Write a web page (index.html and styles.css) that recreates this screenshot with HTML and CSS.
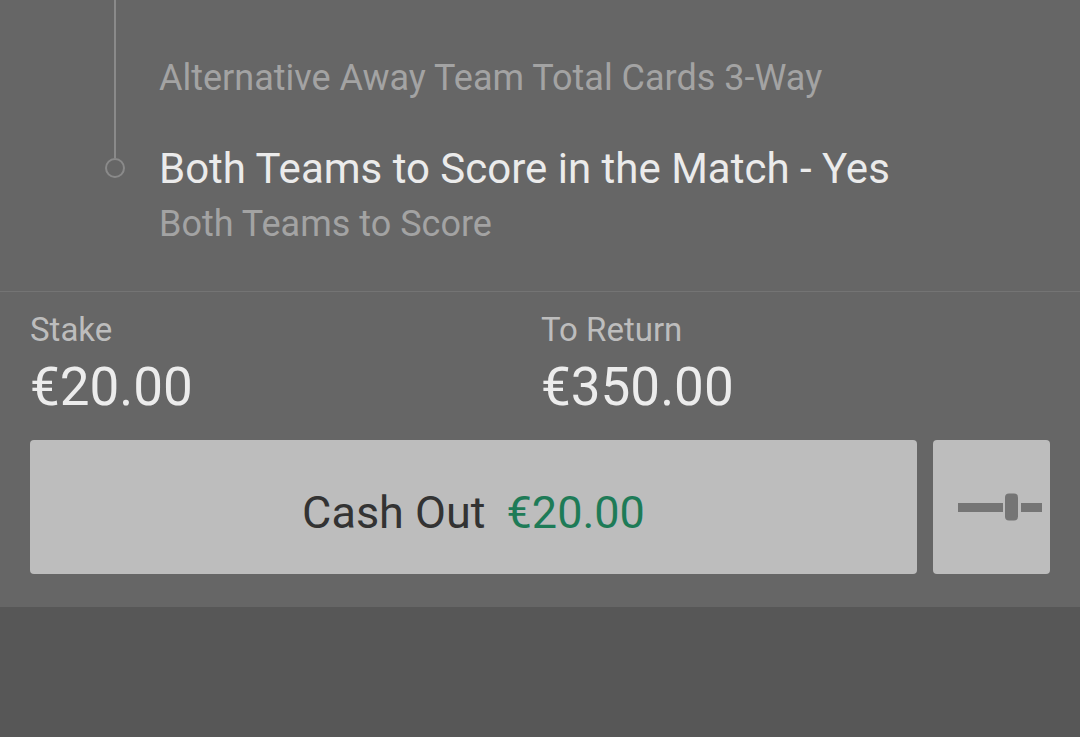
FILE: index.html
```html
<!DOCTYPE html>
<html lang="en">
<head>
    <meta charset="UTF-8">
    <meta name="viewport" content="width=device-width, initial-scale=1.0">
    <title>Bet Slip</title>
    <link rel="stylesheet" href="styles.css">
</head>
<body>

<div class="bet-card">
    <!-- Selections of the bet -->
    <div class="legs">
        <div class="leg leg-prev">
            <div class="leg-market">Alternative Away Team Total Cards 3-Way</div>
        </div>
        <div class="leg leg-last">
            <div class="leg-title">Both Teams to Score in the Match - Yes</div>
            <div class="leg-market">Both Teams to Score</div>
        </div>
    </div>

    <!-- Stake and return -->
    <div class="summary">
        <div class="totals">
            <div class="total">
                <div class="total-label">Stake</div>
                <div class="total-value">€20.00</div>
            </div>
            <div class="total">
                <div class="total-label">To Return</div>
                <div class="total-value">€350.00</div>
            </div>
        </div>

        <div class="actions">
            <button class="cashout-btn">
                <span class="cashout-label">Cash Out</span>
                <span class="cashout-amount">€20.00</span>
            </button>
            <button class="partial-btn" aria-label="Partial cash out">
                <svg width="116" height="134" viewBox="0 0 116 134">
                    <rect x="24" y="63" width="45" height="9" fill="#757575"/>
                    <rect x="71" y="53.5" width="13" height="27" rx="4" fill="#757575"/>
                    <rect x="87" y="63" width="21" height="9" fill="#757575"/>
                </svg>
            </button>
        </div>
    </div>
</div>

</body>
</html>
```

FILE: styles.css
```css
/* Bet card styles */
body {
    margin: 0;
    background-color: #575757;
    font-family: Roboto, "Liberation Sans", sans-serif;
}

.bet-card {
    background-color: #666666;
}

.legs {
    padding: 58px 0 47px 159px;
}

.leg {
    position: relative;
}

/* timeline rail coming down from the previous leg */
.leg-prev::before {
    content: "";
    position: absolute;
    left: -45px;
    top: -58px;
    width: 2px;
    height: 158px;
    background-color: #8a8a8a;
}

/* dot of the last leg */
.leg-last::before {
    content: "";
    position: absolute;
    left: -54px;
    top: 13px;
    width: 16px;
    height: 16px;
    border: 2px solid #8a8a8a;
    border-radius: 50%;
}

.leg-last {
    margin-top: 47px;
}

.leg-market {
    font-size: 36px;
    line-height: 40px;
    color: #a3a3a3;
}

.leg-title {
    font-size: 42px;
    line-height: 48px;
    color: #ebebeb;
    margin-bottom: 11px;
}

.summary {
    border-top: 1px solid #747474;
    padding: 20px 30px 33px 30px;
}

.totals {
    display: grid;
    grid-template-columns: 511px 1fr;
}

.total-label {
    font-size: 33px;
    line-height: 36px;
    color: #bdbdbd;
}

.total-value {
    font-size: 53px;
    line-height: 60px;
    color: #ececec;
    margin-top: 9px;
}

.actions {
    display: flex;
    gap: 16px;
    margin-top: 23px;
}

button {
    border: none;
    border-radius: 4px;
    background-color: #bdbdbd;
    height: 134px;
    padding: 0;
    font-family: inherit;
    cursor: pointer;
}

.cashout-btn {
    flex: 1;
    display: flex;
    align-items: center;
    justify-content: center;
    gap: 21px;
    font-size: 45px;
    line-height: 1;
    padding-top: 11px;
}

.cashout-label {
    color: #333333;
}

.cashout-amount {
    color: #1e7b57;
}

.partial-btn {
    width: 117px;
    display: flex;
    align-items: center;
    justify-content: center;
}
```
